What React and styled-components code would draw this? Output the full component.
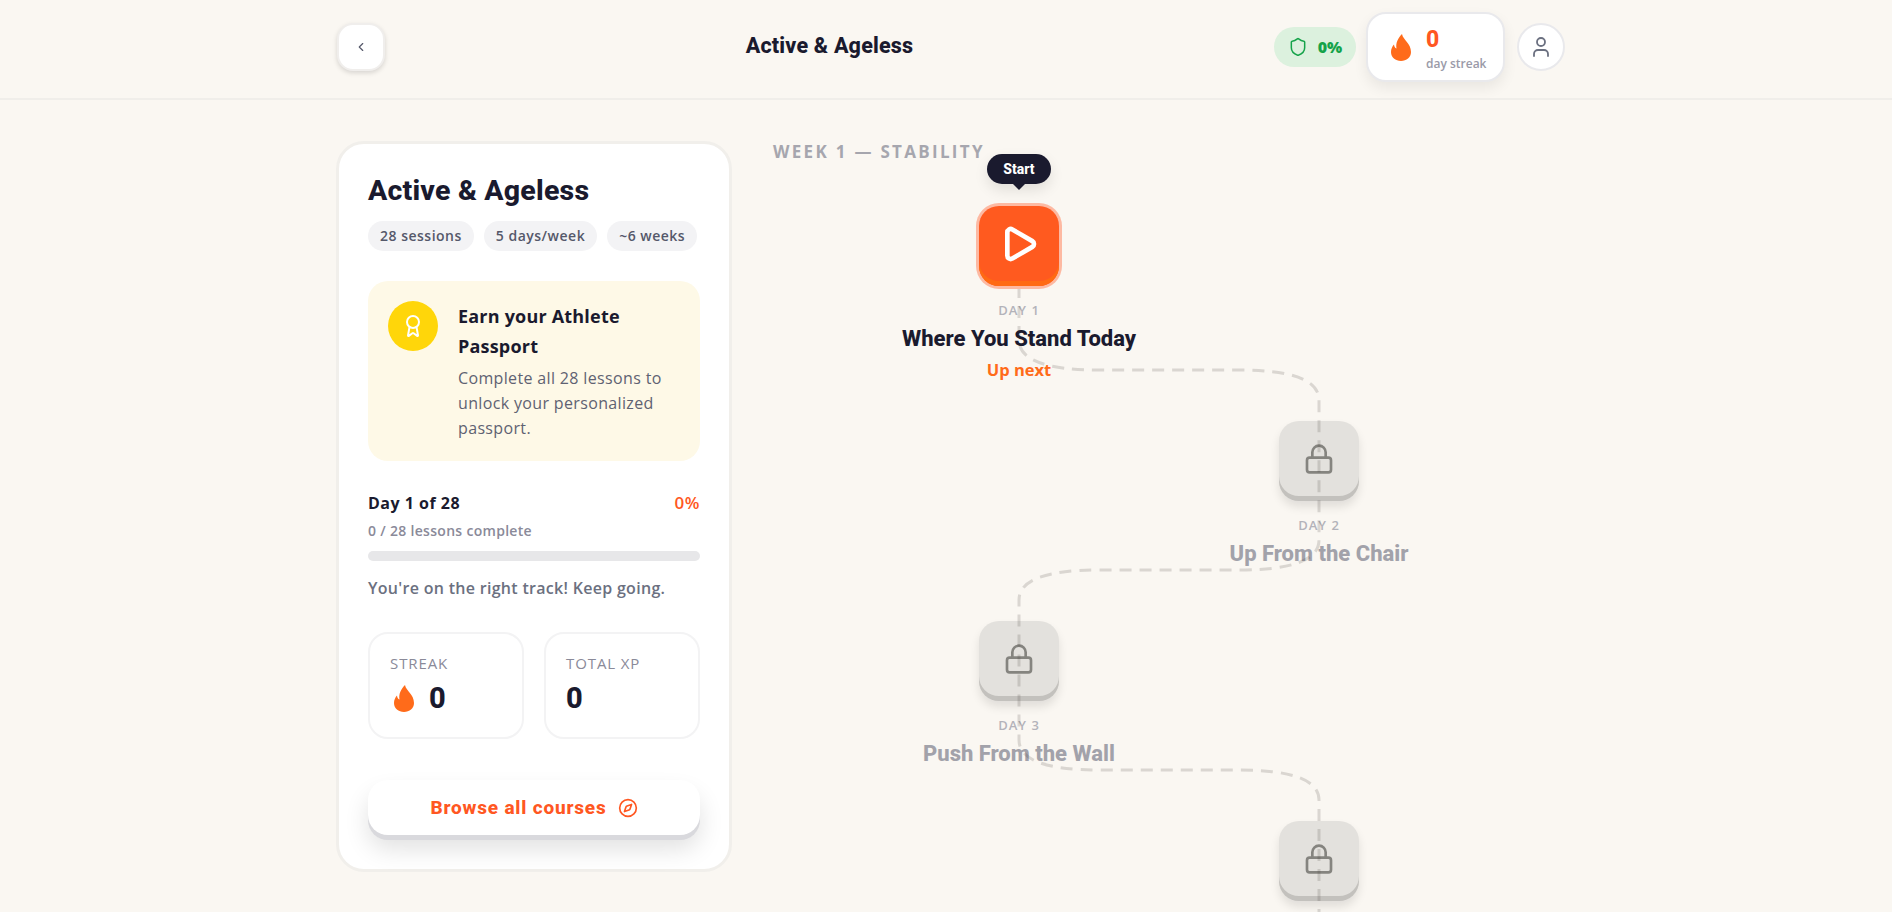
import styled, { createGlobalStyle } from "styled-components";
import { Award, ChevronLeft, Compass, Lock, Play, Shield, User } from "lucide-react";

const GlobalStyle = createGlobalStyle`
  html, body {
    margin: 0;
    padding: 0;
    background: #faf7f2;
    overflow: hidden;
  }
  * { box-sizing: border-box; }
`;

const heading = `"Roboto", "Liberation Sans", sans-serif`;
const body = `"Open Sans", "Noto Sans", sans-serif`;

const Page = styled.div`
  height: 100vh;
  overflow: hidden;
  background: #faf7f2;
  font-family: ${body};
  color: #1a1a2e;
`;

const Header = styled.header`
  border-bottom: 2px solid #f0eeea;
  padding: 12px 0 16px 337px;
`;

const HeaderRow = styled.div`
  width: 1228px;
  height: 70px;
  display: flex;
  align-items: center;
`;

const BackButton = styled.button`
  width: 48px;
  height: 48px;
  border-radius: 16px;
  border: 2px solid #f0eeec;
  background: #fff;
  box-shadow: 0 2px 5px rgba(0, 0, 0, 0.14);
  color: #55586a;
  display: flex;
  align-items: center;
  justify-content: center;
  padding: 0;
`;

const HeaderTitle = styled.h1`
  flex: 1;
  margin: 0 0 2px;
  text-align: center;
  font: 800 21.5px/30px ${heading};
  letter-spacing: 0.2px;
  color: #1a1a2e;
`;

const HeaderRight = styled.div`
  display: flex;
  align-items: center;
`;

const SafePill = styled.div`
  width: 82px;
  height: 40px;
  border-radius: 20px;
  background: #dcf1de;
  color: #16a34a;
  display: flex;
  align-items: center;
  justify-content: center;
  gap: 10px;
  font: 800 16px/20px ${body};
  margin-right: 10px;
`;

const StreakCard = styled.div`
  width: 139px;
  height: 70px;
  border: 2px solid #e9e9ec;
  border-radius: 20px;
  background: #fff;
  box-shadow: 0 6px 14px rgba(0, 0, 0, 0.07);
  display: flex;
  align-items: center;
  gap: 15px;
  padding: 0 0 0 23px;
  margin-right: 12px;
`;

const StreakText = styled.div`
  display: flex;
  flex-direction: column;
  padding-top: 4px;
`;

const StreakCount = styled.span`
  font: 800 23px/28px ${heading};
  color: #ff5722;
  margin-bottom: 2px;
`;

const StreakCaption = styled.span`
  font: 600 12px/16px ${body};
  color: #9a9aa8;
`;

const Avatar = styled.div`
  width: 48px;
  height: 48px;
  border-radius: 50%;
  border: 2px solid #e9e9ec;
  background: #fff;
  color: #6b7080;
  display: flex;
  align-items: center;
  justify-content: center;
`;

const Main = styled.main`
  display: flex;
  gap: 41px;
  padding: 41px 0 0 336px;
`;

const SideCard = styled.aside`
  width: 396px;
  height: 731px;
  flex: none;
  border: 3px solid #f1efeb;
  border-radius: 28px;
  background: #fff;
  padding: 28px 29px 0;
`;

const CardTitle = styled.h2`
  margin: 0;
  font: 800 28.5px/38px ${heading};
  letter-spacing: 0.2px;
  color: #1a1a2e;
`;

const Chips = styled.div`
  display: flex;
  gap: 10px;
  margin-top: 11px;
`;

const Chip = styled.span`
  height: 30px;
  padding: 0 12px;
  border-radius: 15px;
  background: #f3f3f5;
  color: #55586a;
  font: 600 14px/30px ${body};
  letter-spacing: 0.5px;
  white-space: nowrap;
`;

const Passport = styled.div`
  margin-top: 30px;
  height: 180px;
  padding: 20px;
  border-radius: 20px;
  background: #fef9e7;
  display: flex;
  gap: 20px;
`;

const Medal = styled.div`
  width: 50px;
  height: 50px;
  flex: none;
  border-radius: 50%;
  background: #ffd60a;
  color: #fff;
  display: flex;
  align-items: center;
  justify-content: center;
`;

const PassportTitle = styled.div`
  font: 700 18px/30px ${body};
  letter-spacing: 0.2px;
  color: #1a1a2e;
`;

const PassportText = styled.p`
  margin: 5px 0 0;
  font: 400 16px/25px ${body};
  letter-spacing: 0.35px;
  color: #5f6272;
`;

const ProgressRow = styled.div`
  display: flex;
  justify-content: space-between;
  margin-top: 30px;
  font: 700 16px/24px ${body};
  letter-spacing: 0.5px;
`;

const Percent = styled.span`
  color: #ff5722;
  font-weight: 600;
  font-size: 17px;
`;

const ProgressSub = styled.div`
  margin-top: 6px;
  font: 600 14px/20px ${body};
  letter-spacing: 0.3px;
  color: #8a8a99;
`;

const Bar = styled.div`
  margin-top: 10px;
  height: 10px;
  border-radius: 5px;
  background: #e7e7e9;
`;

const Cheer = styled.div`
  margin-top: 15px;
  font: 600 16px/24px ${body};
  letter-spacing: 0.3px;
  color: #6b7080;
`;

const Stats = styled.div`
  display: grid;
  grid-template-columns: 1fr 1fr;
  gap: 20px;
  margin-top: 32px;
`;

const Stat = styled.div`
  height: 107px;
  border: 2px solid #f3f3f4;
  border-radius: 20px;
  padding: 18px 20px 0;
`;

const StatLabel = styled.div`
  font: 500 15px/22px ${body};
  letter-spacing: 0.9px;
  text-transform: uppercase;
  color: #8a8a99;
`;

const StatValue = styled.div`
  display: flex;
  align-items: center;
  gap: 15px;
  margin-top: 4px;
  height: 40px;
  font: 800 29px/40px ${heading};
  color: #1a1a2e;

  svg {
    margin-left: 4px;
  }
`;

const BrowseButton = styled.button`
  width: 100%;
  height: 55px;
  margin-top: 41px;
  border: 0;
  border-radius: 20px;
  background: #fff;
  box-shadow: 0 5px 0 #d9d9dd, 0 14px 24px rgba(0, 0, 0, 0.12);
  color: #ff5722;
  font: 800 19px/24px ${heading};
  letter-spacing: 0.8px;
  display: flex;
  align-items: center;
  justify-content: center;
  gap: 11px;
`;

const PathColumn = styled.section`
  flex: none;
`;

const WeekLabel = styled.div`
  font: 700 17px/22px ${body};
  letter-spacing: 2.3px;
  color: #a6a6ae;
`;

const Track = styled.div`
  position: relative;
  width: 600px;
  margin: 43px 0 0 96px;
`;

const TrackLine = styled.svg`
  position: absolute;
  top: 0;
  left: 0;
  z-index: 1;
  overflow: visible;
  pointer-events: none;
`;

const Step = styled.div`
  width: 300px;
  height: ${(p) => (p.$active ? 215 : 200)}px;
  margin-left: ${(p) => (p.$right ? 300 : 0)}px;
  display: flex;
  flex-direction: column;
  align-items: center;
  text-align: center;
  white-space: nowrap;
`;

const Node = styled.div`
  position: relative;
  width: 80px;
  height: 80px;
  flex: none;
  border-radius: 20px;
  padding-bottom: 4px;
  display: flex;
  align-items: center;
  justify-content: center;
  ${(p) =>
    p.$active
      ? `
    z-index: 2;
    background: #ff5a1f;
    color: #fff;
    box-shadow: inset 0 -5px 0 #ff6a13, 0 0 0 3px #fdb9a2;
  `
      : `
    background: #e3e1dd;
    color: #85847f;
    box-shadow: inset 0 -5px 0 #c3c1bd, 0 6px 10px rgba(0, 0, 0, 0.1);
  `}
`;

const Tooltip = styled.div`
  position: absolute;
  top: -52px;
  left: 50%;
  transform: translateX(-50%);
  width: 64px;
  height: 30px;
  border-radius: 15px;
  background: #1a1a2e;
  box-shadow: 0 6px 14px rgba(0, 0, 0, 0.1);
  color: #fff;
  font: 800 14px/30px ${heading};
  text-align: center;

  &::after {
    content: "";
    position: absolute;
    left: 50%;
    bottom: -6px;
    margin-left: -6px;
    border: solid transparent;
    border-width: 6px 6px 0;
    border-top-color: #1a1a2e;
  }
`;

const DayLabel = styled.div`
  margin-top: 15px;
  font: 600 13px/18px ${body};
  letter-spacing: 1px;
  color: #b3b3ba;
`;

const StepTitle = styled.div`
  margin-top: 6px;
  font: 800 22px/28px ${heading};
  color: ${(p) => (p.$locked ? "#a2a2aa" : "#1a1a2e")};
`;

const UpNext = styled.div`
  margin-top: 5px;
  font: 700 16.5px/24px ${body};
  color: #ff6b1a;
`;

function Flame() {
  return (
    <svg width="20" height="27" viewBox="0 0 20 27" fill="#ff6b1a" style={{ flex: "none" }}>
      <path d="M11 0C12 6 20 9 20 18C20 23.5 15.5 27 10 27C4.5 27 0 23.5 0 18C0 15 1.2 12.5 3 10.5C3.2 12.5 4 14 5.5 14.5C4.5 9 7 4 11 0Z" />
    </svg>
  );
}

// the fourth lesson's labels are below the fold, so only its node is drawn
const lessons = [
  { day: 1, title: "Where You Stand Today", active: true },
  { day: 2, title: "Up From the Chair", right: true },
  { day: 3, title: "Push From the Wall" },
  { day: 4, right: true },
];

const routeD =
  "M150 40L150 134Q150 164 230 164L370 164Q450 164 450 194L450 334Q450 364 370 364L230 364Q150 364 150 394L150 534Q150 564 230 564L370 564Q450 564 450 594L450 740";

export default function App() {
  return (
    <Page>
      <GlobalStyle />
      <Header>
        <HeaderRow>
          <BackButton aria-label="Back">
            <ChevronLeft size={14} strokeWidth={2} />
          </BackButton>
          <HeaderTitle>Active &amp; Ageless</HeaderTitle>
          <HeaderRight>
            <SafePill>
              <Shield size={20} strokeWidth={1.8} />
              0%
            </SafePill>
            <StreakCard>
              <Flame />
              <StreakText>
                <StreakCount>0</StreakCount>
                <StreakCaption>day streak</StreakCaption>
              </StreakText>
            </StreakCard>
            <Avatar>
              <User size={24} strokeWidth={1.8} />
            </Avatar>
          </HeaderRight>
        </HeaderRow>
      </Header>

      <Main>
        <SideCard>
          <CardTitle>Active &amp; Ageless</CardTitle>
          <Chips>
            <Chip>28 sessions</Chip>
            <Chip>5 days/week</Chip>
            <Chip>~6 weeks</Chip>
          </Chips>

          <Passport>
            <Medal>
              <Award size={24} strokeWidth={2} />
            </Medal>
            <div>
              <PassportTitle>Earn your Athlete Passport</PassportTitle>
              <PassportText>Complete all 28 lessons to unlock your personalized passport.</PassportText>
            </div>
          </Passport>

          <ProgressRow>
            <span>Day 1 of 28</span>
            <Percent>0%</Percent>
          </ProgressRow>
          <ProgressSub>0 / 28 lessons complete</ProgressSub>
          <Bar />
          <Cheer>You're on the right track! Keep going.</Cheer>

          <Stats>
            <Stat>
              <StatLabel>Streak</StatLabel>
              <StatValue>
                <Flame />
                0
              </StatValue>
            </Stat>
            <Stat>
              <StatLabel>Total XP</StatLabel>
              <StatValue>0</StatValue>
            </Stat>
          </Stats>

          <BrowseButton>
            Browse all courses
            <Compass size={20} strokeWidth={2} />
          </BrowseButton>
        </SideCard>

        <PathColumn>
          <WeekLabel>WEEK 1 — STABILITY</WeekLabel>
          <Track>
            <TrackLine width="600" height="800" viewBox="0 0 600 800" fill="none">
              <path d={routeD} stroke="rgba(60,55,50,0.17)" strokeWidth="3" strokeDasharray="12 8" />
            </TrackLine>
            {lessons.map((lesson) => (
              <Step key={lesson.day} $right={lesson.right} $active={lesson.active}>
                <Node $active={lesson.active}>
                  {lesson.active && <Tooltip>Start</Tooltip>}
                  {lesson.active ? <Play size={40} strokeWidth={2.8} /> : <Lock size={32} strokeWidth={2} />}
                </Node>
                {lesson.title && <DayLabel>DAY {lesson.day}</DayLabel>}
                {lesson.title && <StepTitle $locked={!lesson.active}>{lesson.title}</StepTitle>}
                {lesson.active && <UpNext>Up next</UpNext>}
              </Step>
            ))}
          </Track>
        </PathColumn>
      </Main>
    </Page>
  );
}
